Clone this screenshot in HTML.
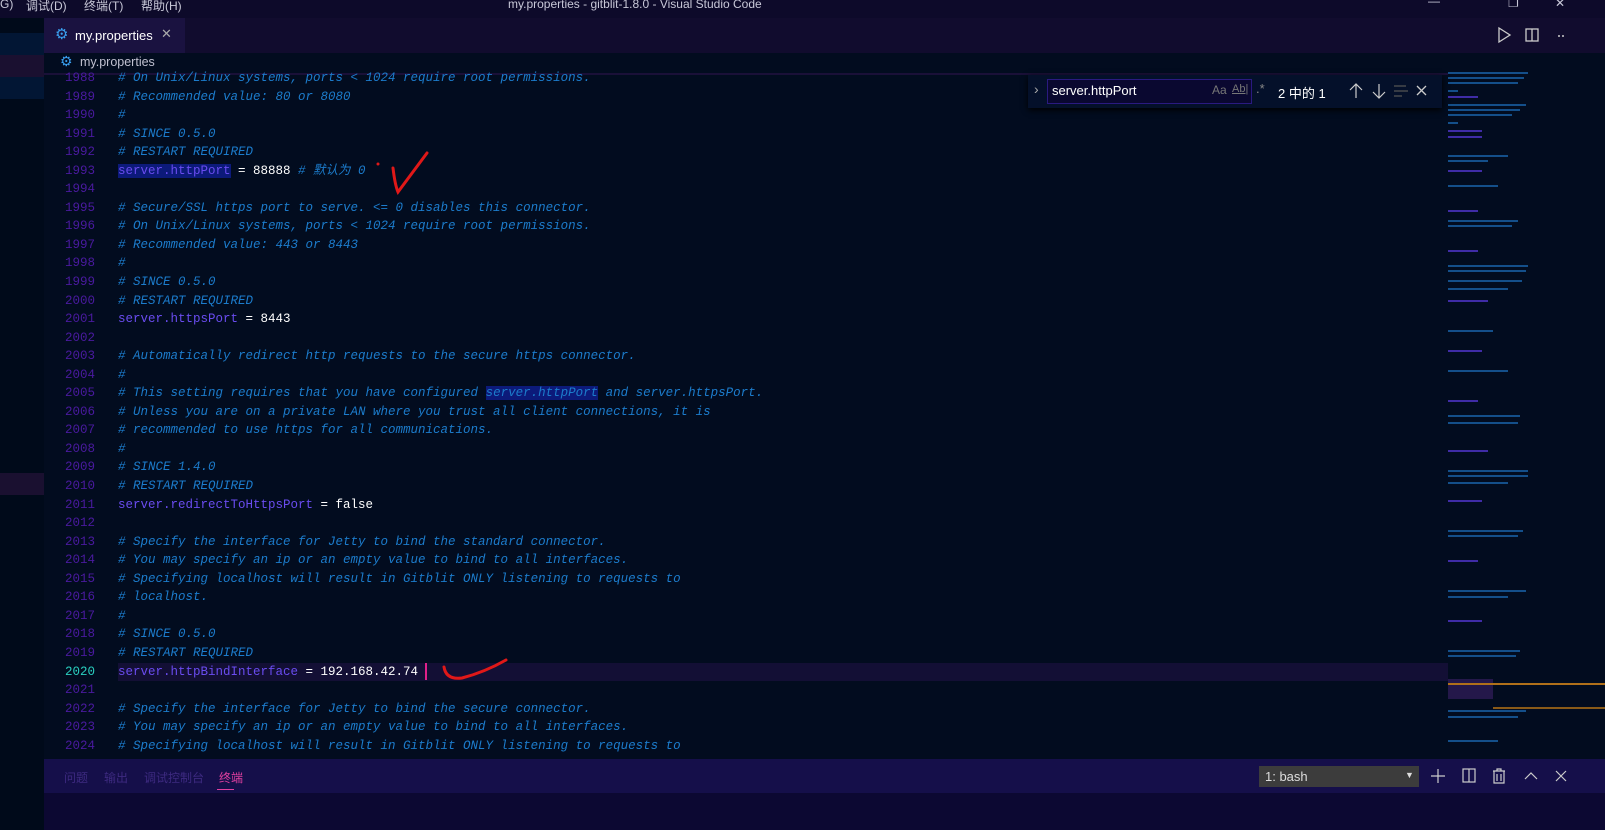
<!DOCTYPE html>
<html><head><meta charset="utf-8"><style>
*{margin:0;padding:0;box-sizing:border-box}
body{width:1605px;height:830px;background:#020c1f;overflow:hidden;position:relative;font-family:"Liberation Sans","Noto Sans CJK SC",sans-serif}
.title{position:absolute;left:0;top:0;width:1605px;height:18px;background:#0d0a2a;color:#c8c8d8;font-size:12px}
.title span{position:absolute;top:-3px}
.tabs{position:absolute;left:44px;top:18px;width:1561px;height:35px;background:#110c2e}
.tab{position:absolute;left:0;top:0;width:141px;height:35px;background:#1a1240;color:#fff;font-size:13px}
.side{position:absolute;left:0;top:18px;width:44px;height:812px;background:#000a1a}
.bc{position:absolute;left:44px;top:53px;width:1400px;height:21px;color:#c0c0d0;font-size:12.5px}
.code{position:absolute;left:44px;top:69px;font-family:"Liberation Mono","Noto Sans CJK SC",monospace;font-size:12.5px}
.l{height:18.56px;line-height:18.56px;white-space:pre;position:relative}
.n{display:inline-block;width:51px;text-align:right;color:#4a1aa0;margin-right:23px}
.c{color:#1c7ccc;font-style:italic}
.k{color:#6a4cf0}
.v{color:#fff}
.hl{background:#0c1a7a}
.panel{position:absolute;left:44px;top:759px;width:1561px;height:71px;background:#0c0832}
.ptabs{position:absolute;left:0;top:0;width:1561px;height:34px;background:#150f4a;font-size:12px}
.pt{position:absolute;top:10px;color:#3d2a80}
.find{position:absolute;left:1028px;top:75px;width:414px;height:33px;background:#04102a;box-shadow:0 2px 6px #000}
</style></head><body>
<div class="title">
<span style="left:0">G)</span><span style="left:26px">调试(D)</span><span style="left:84px">终端(T)</span><span style="left:141px">帮助(H)</span>
<span style="left:508px">my.properties - gitblit-1.8.0 - Visual Studio Code</span>
<span style="left:1428px;top:-6px">—</span><span style="left:1508px;top:-4px">❐</span><span style="left:1555px;top:-4px">✕</span>
</div>
<div class="side">
<div style="position:absolute;top:15px;width:44px;height:22px;background:#021634"></div>
<div style="position:absolute;top:37px;width:44px;height:22px;background:#1a1030"></div>
<div style="position:absolute;top:59px;width:44px;height:22px;background:#021634"></div>
<div style="position:absolute;top:455px;width:44px;height:22px;background:#1a1030"></div>
</div>
<div class="tabs">
<div class="tab"><span style="position:absolute;left:11px;top:7px;color:#3aa0f0;font-size:15px">⚙</span><span style="position:absolute;left:31px;top:10px">my.properties</span><span style="position:absolute;left:117px;top:8px;color:#aaa;font-size:13px">✕</span></div>
<svg style="position:absolute;left:1449px;top:8px" width="120" height="18"><path d="M6 2 L17 9 L6 16 Z" fill="none" stroke="#ccc" stroke-width="1.3"/><rect x="33" y="3" width="12" height="12" fill="none" stroke="#ccc" stroke-width="1.3"/><line x1="39" y1="3" x2="39" y2="15" stroke="#ccc" stroke-width="1.3"/><circle cx="66" cy="10" r="1" fill="#ccc"/><circle cx="70" cy="10" r="1" fill="#ccc"/></svg>
</div>
<div class="bc"><span style="position:absolute;left:16px;top:0;color:#3aa0f0;font-size:14px">⚙</span><span style="position:absolute;left:36px;top:2px">my.properties</span></div>
<div style="position:absolute;left:44px;top:73px;width:1404px;height:2px;background:#1a1038"></div>
<div class="code">
<div class="l"><span class="n">1988</span><span class="c"># On Unix/Linux systems, ports &lt; 1024 require root permissions.</span></div>
<div class="l"><span class="n">1989</span><span class="c"># Recommended value: 80 or 8080</span></div>
<div class="l"><span class="n">1990</span><span class="c">#</span></div>
<div class="l"><span class="n">1991</span><span class="c"># SINCE 0.5.0</span></div>
<div class="l"><span class="n">1992</span><span class="c"># RESTART REQUIRED</span></div>
<div class="l"><span class="n">1993</span><span class="k hl">server.httpPort</span><span class="v"> = 88888 </span><span class="c"># 默认为 0</span></div>
<div class="l"><span class="n">1994</span></div>
<div class="l"><span class="n">1995</span><span class="c"># Secure/SSL https port to serve. &lt;= 0 disables this connector.</span></div>
<div class="l"><span class="n">1996</span><span class="c"># On Unix/Linux systems, ports &lt; 1024 require root permissions.</span></div>
<div class="l"><span class="n">1997</span><span class="c"># Recommended value: 443 or 8443</span></div>
<div class="l"><span class="n">1998</span><span class="c">#</span></div>
<div class="l"><span class="n">1999</span><span class="c"># SINCE 0.5.0</span></div>
<div class="l"><span class="n">2000</span><span class="c"># RESTART REQUIRED</span></div>
<div class="l"><span class="n">2001</span><span class="k">server.httpsPort</span><span class="v"> = 8443</span></div>
<div class="l"><span class="n">2002</span></div>
<div class="l"><span class="n">2003</span><span class="c"># Automatically redirect http requests to the secure https connector.</span></div>
<div class="l"><span class="n">2004</span><span class="c">#</span></div>
<div class="l"><span class="n">2005</span><span class="c"># This setting requires that you have configured <span class="hl">server.httpPort</span> and server.httpsPort.</span></div>
<div class="l"><span class="n">2006</span><span class="c"># Unless you are on a private LAN where you trust all client connections, it is</span></div>
<div class="l"><span class="n">2007</span><span class="c"># recommended to use https for all communications.</span></div>
<div class="l"><span class="n">2008</span><span class="c">#</span></div>
<div class="l"><span class="n">2009</span><span class="c"># SINCE 1.4.0</span></div>
<div class="l"><span class="n">2010</span><span class="c"># RESTART REQUIRED</span></div>
<div class="l"><span class="n">2011</span><span class="k">server.redirectToHttpsPort</span><span class="v"> = false</span></div>
<div class="l"><span class="n">2012</span></div>
<div class="l"><span class="n">2013</span><span class="c"># Specify the interface for Jetty to bind the standard connector.</span></div>
<div class="l"><span class="n">2014</span><span class="c"># You may specify an ip or an empty value to bind to all interfaces.</span></div>
<div class="l"><span class="n">2015</span><span class="c"># Specifying localhost will result in Gitblit ONLY listening to requests to</span></div>
<div class="l"><span class="n">2016</span><span class="c"># localhost.</span></div>
<div class="l"><span class="n">2017</span><span class="c">#</span></div>
<div class="l"><span class="n">2018</span><span class="c"># SINCE 0.5.0</span></div>
<div class="l"><span class="n">2019</span><span class="c"># RESTART REQUIRED</span></div>
<div class="l"><span class="n" style="color:#2ad0c0">2020</span><span style="position:absolute;left:74px;top:0;width:1330px;height:18.56px;background:#130f35;z-index:-1"></span><span class="k">server.httpBindInterface</span><span class="v"> = 192.168.42.74</span><span style="display:inline-block;width:2px;height:17px;background:#e0208a;margin-left:7px;vertical-align:middle"></span></div>
<div class="l"><span class="n">2021</span></div>
<div class="l"><span class="n">2022</span><span class="c"># Specify the interface for Jetty to bind the secure connector.</span></div>
<div class="l"><span class="n">2023</span><span class="c"># You may specify an ip or an empty value to bind to all interfaces.</span></div>
<div class="l"><span class="n">2024</span><span class="c"># Specifying localhost will result in Gitblit ONLY listening to requests to</span></div>
</div>
<svg style="position:absolute;left:0;top:0" width="600" height="700">
<path d="M393 168 Q395 185 398 192 L427 153" fill="none" stroke="#e01818" stroke-width="3" stroke-linecap="round"/>
<circle cx="378" cy="164" r="1.5" fill="#e01818"/>
<path d="M444 667 Q446 680 462 678 Q485 672 506 660" fill="none" stroke="#e01818" stroke-width="3" stroke-linecap="round"/>
</svg>
<svg style="position:absolute;left:1448px;top:70px" width="157" height="689">
<g fill="#1c6cb8" opacity="0.7">
<rect x="0" y="2" width="80" height="2"/><rect x="0" y="7" width="76" height="2"/><rect x="0" y="12" width="70" height="2"/><rect x="0" y="20" width="10" height="2"/>
<rect x="0" y="34" width="78" height="2"/><rect x="0" y="39" width="72" height="2"/><rect x="0" y="44" width="64" height="2"/><rect x="0" y="52" width="10" height="2"/>
<rect x="0" y="85" width="60" height="2"/><rect x="0" y="90" width="40" height="2"/>
<rect x="0" y="115" width="50" height="2"/><rect x="0" y="150" width="70" height="2"/><rect x="0" y="155" width="64" height="2"/>
<rect x="0" y="195" width="80" height="2"/><rect x="0" y="200" width="78" height="2"/><rect x="0" y="210" width="74" height="2"/><rect x="0" y="218" width="60" height="2"/>
<rect x="0" y="260" width="45" height="2"/><rect x="0" y="300" width="60" height="2"/><rect x="0" y="345" width="72" height="2"/><rect x="0" y="352" width="70" height="2"/>
<rect x="0" y="400" width="80" height="2"/><rect x="0" y="405" width="80" height="2"/><rect x="0" y="412" width="60" height="2"/><rect x="0" y="460" width="75" height="2"/>
<rect x="0" y="465" width="70" height="2"/><rect x="0" y="520" width="78" height="2"/><rect x="0" y="526" width="60" height="2"/><rect x="0" y="580" width="72" height="2"/>
<rect x="0" y="585" width="68" height="2"/><rect x="0" y="640" width="78" height="2"/><rect x="0" y="646" width="70" height="2"/><rect x="0" y="670" width="50" height="2"/>
</g>
<g fill="#5a3ae0" opacity="0.7">
<rect x="0" y="26" width="30" height="2"/><rect x="0" y="60" width="34" height="2"/><rect x="0" y="66" width="34" height="2"/><rect x="0" y="100" width="34" height="2"/>
<rect x="0" y="140" width="30" height="2"/><rect x="0" y="180" width="30" height="2"/><rect x="0" y="230" width="40" height="2"/><rect x="0" y="280" width="34" height="2"/>
<rect x="0" y="330" width="30" height="2"/><rect x="0" y="380" width="40" height="2"/><rect x="0" y="430" width="34" height="2"/><rect x="0" y="490" width="30" height="2"/>
<rect x="0" y="550" width="34" height="2"/><rect x="0" y="610" width="30" height="2"/>
</g>
<rect x="0" y="609" width="45" height="20" fill="#24184a"/>
<rect x="0" y="613" width="157" height="2" fill="#b0701a"/>
<rect x="45" y="637" width="112" height="2" fill="#8a5a18"/>
</svg>
<div class="find">
<span style="position:absolute;left:6px;top:6px;color:#aaa;font-size:14px">›</span>
<div style="position:absolute;left:19px;top:4px;width:205px;height:25px;background:#0a0830;border:1px solid #2a1a80"></div>
<span style="position:absolute;left:24px;top:8px;color:#fff;font-size:13px">server.httpPort</span>
<span style="position:absolute;left:184px;top:8px;color:#777;font-size:12px">Aa</span>
<span style="position:absolute;left:204px;top:8px;color:#777;font-size:11px;text-decoration:underline">Ab|</span>
<span style="position:absolute;left:228px;top:6px;color:#888;font-size:13px">.*</span>
<span style="position:absolute;left:250px;top:8px;color:#fff;font-size:13px">2 中的 1</span>
<svg style="position:absolute;left:318px;top:7px" width="92" height="18"><path d="M10 2V16M4 8L10 2L16 8" fill="none" stroke="#ccc" stroke-width="1.2"/><path d="M33 2V16M27 10L33 16L39 10" fill="none" stroke="#ccc" stroke-width="1.2"/><path d="M48 4H60M48 9H62M48 14H56" stroke="#555" stroke-width="1.2"/><path d="M71 4L80 13M80 4L71 13" stroke="#ccc" stroke-width="1.3"/></svg>
</div>
<div class="panel"><div class="ptabs">
<span class="pt" style="left:20px">问题</span><span class="pt" style="left:60px">输出</span><span class="pt" style="left:100px">调试控制台</span><span class="pt" style="left:175px;color:#e040a0">终端</span>
<div style="position:absolute;left:173px;top:30px;width:17px;height:1px;background:#e040a0"></div>
<div style="position:absolute;left:1215px;top:7px;width:160px;height:21px;background:#3c3c3c;color:#ddd;font-size:13px"><span style="position:absolute;left:6px;top:3px">1: bash</span><span style="position:absolute;left:146px;top:4px;font-size:9px">▼</span></div>
<svg style="position:absolute;left:1385px;top:8px" width="176" height="18"><path d="M9 2V16M2 9H16" stroke="#ccc" stroke-width="1.2"/><rect x="34" y="2" width="12" height="13" fill="none" stroke="#ccc" stroke-width="1.2"/><line x1="40" y1="2" x2="40" y2="15" stroke="#ccc" stroke-width="1.2"/><path d="M64 4H76M68 4V2H72V4M65 4V16H75V4M68 7V14M72 7V14" fill="none" stroke="#ccc" stroke-width="1.2"/><path d="M96 12L102 6L108 12" fill="none" stroke="#ccc" stroke-width="1.2"/><path d="M127 4L137 14M137 4L127 14" stroke="#ccc" stroke-width="1.2"/></svg>
</div></div>
</body></html>
